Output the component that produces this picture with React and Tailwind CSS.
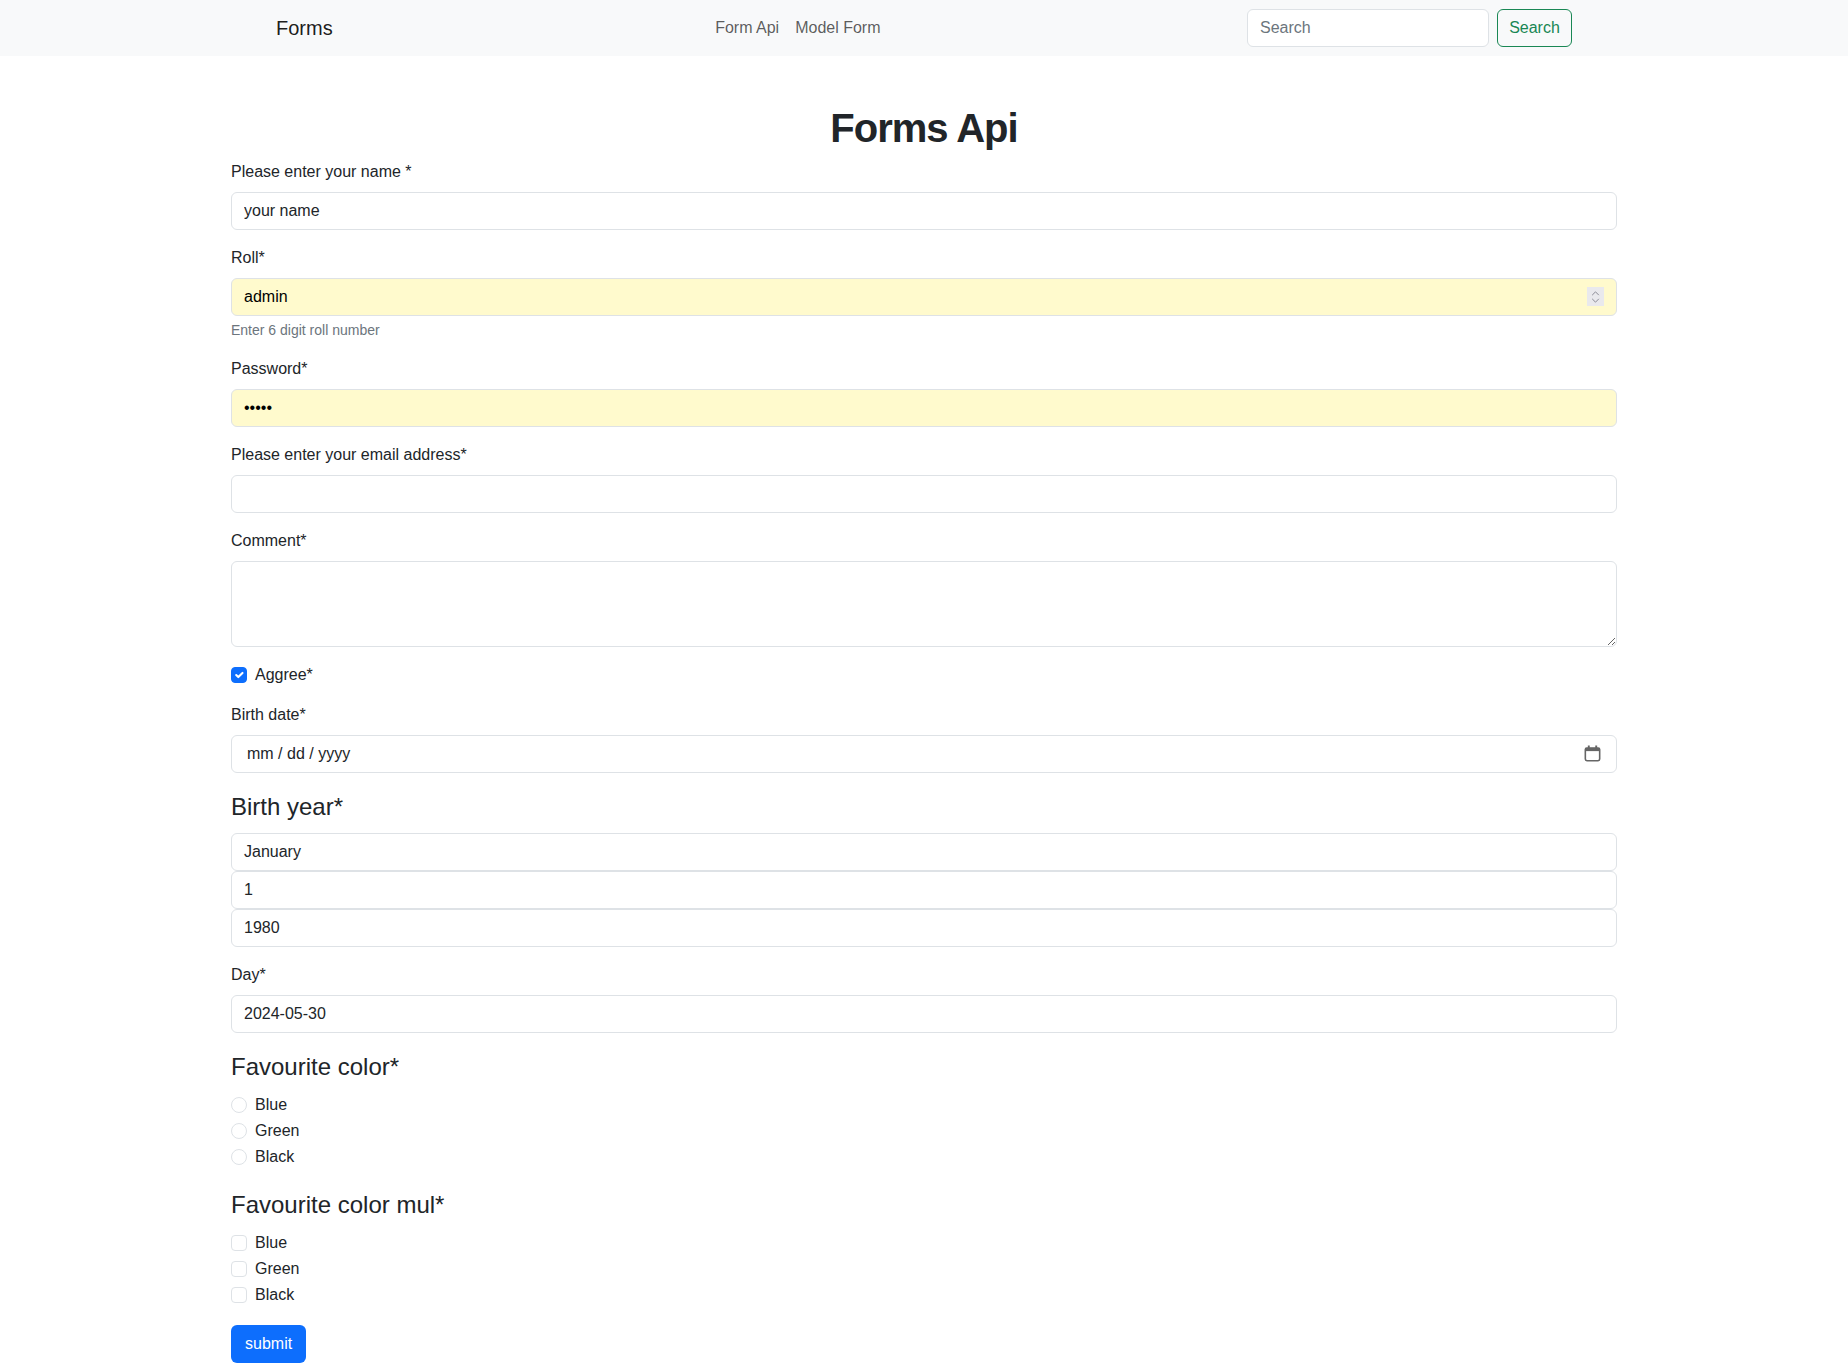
import React from 'react';

const baseCls = 'block w-full h-[38px] px-3 py-1.5 border border-[#dee2e6] rounded-md text-base leading-6 outline-none';
const inputCls = `${baseCls} text-[#212529] bg-white`;
const autoCls = `${baseCls} text-black bg-[#fffacd]`;

function Field({ label, children, help }) {
    return (
        <div className="mb-4">
            <label className="block mb-2 text-base leading-6">{label}</label>
            {children}
            {help && <div className="mt-1 text-sm leading-[21px] text-[#6c757d]">{help}</div>}
        </div>
    );
}

function Check({ type = 'checkbox', label, checked = false }) {
    const round = type === 'radio' ? 'rounded-full' : 'rounded-[4px]';
    return (
        <div className="flex min-h-6 mb-0.5">
            <span className={`mt-1 w-4 h-4 shrink-0 border flex items-center justify-center ${round} ${checked ? 'bg-[#0d6efd] border-[#0d6efd]' : 'bg-white border-[#dee2e6]'}`}>
                {checked && (
                    <svg viewBox="0 0 20 20" className="w-4 h-4" fill="none" stroke="#fff" strokeWidth="3" strokeLinecap="round" strokeLinejoin="round">
                        <path d="M6 10l3 3l6-6" />
                    </svg>
                )}
            </span>
            <span className="ml-2 text-base leading-6">{label}</span>
        </div>
    );
}

export default function App() {
    return (
        <div className="min-h-screen bg-white text-[#212529] font-['Liberation_Sans',Arial,sans-serif]">
            {/* NAVBAR */}
            <nav className="h-14 bg-[#f8f9fa]">
                <div className="w-[1296px] mx-auto h-full flex items-center">
                    <span className="text-xl leading-[30px] text-black/90 mr-4">Forms</span>
                    <ul className="mx-auto flex">
                        <li className="px-2 text-base text-black/65">Form Api</li>
                        <li className="px-2 text-base text-black/65">Model Form</li>
                    </ul>
                    <form className="flex">
                        <input placeholder="Search" className="w-[242px] h-[38px] px-3 border border-[#dee2e6] rounded-md bg-white text-base placeholder:text-[#6c757d] outline-none mr-2" />
                        <button type="button" className="w-[75px] h-[38px] border border-[#198754] text-[#198754] rounded-md text-base">Search</button>
                    </form>
                </div>
            </nav>

            {/* FORM */}
            <div className="w-3/4 mx-auto mt-12">
                <h1 className="text-[40px] leading-[48px] font-semibold tracking-[-1px] text-center mb-2">Forms Api</h1>

                <Field label="Please enter your name *">
                    <input className={inputCls} defaultValue="your name" />
                </Field>

                <Field label="Roll*" help="Enter 6 digit roll number">
                    <div className="relative">
                        <input className={autoCls} defaultValue="admin" />
                        <span className="absolute right-[13px] top-[9px] w-[17px] h-[19px] bg-[#e9e9ed] flex flex-col items-center justify-center gap-[2px]">
                            <svg viewBox="0 0 10 6" className="w-[9px] h-[5px]" fill="none" stroke="#8a8a95" strokeWidth="1.2"><path d="M1 5l4-4l4 4" /></svg>
                            <svg viewBox="0 0 10 6" className="w-[9px] h-[5px]" fill="none" stroke="#8a8a95" strokeWidth="1.2"><path d="M1 1l4 4l4-4" /></svg>
                        </span>
                    </div>
                </Field>

                <Field label="Password*">
                    <input type="password" className={autoCls} defaultValue="admin" />
                </Field>

                <Field label="Please enter your email address*">
                    <input type="email" className={inputCls} />
                </Field>

                <Field label="Comment*">
                    <textarea rows={3} className="block w-full h-[86px] px-3 py-1.5 border border-[#dee2e6] rounded-md text-base leading-6 bg-white outline-none resize-y" />
                </Field>

                <div className="mb-4">
                    <Check label="Aggree*" checked />
                </div>

                <Field label="Birth date*">
                    <div className="relative">
                        <div className={`${inputCls} !pl-[15px]`}>mm / dd / yyyy</div>
                        <svg viewBox="0 0 16 16" className="absolute right-[16px] top-[10px] w-[17px] h-[17px]" fill="none" stroke="#666" strokeWidth="1.5">
                            <rect x="1.25" y="2.75" width="13.5" height="12" rx="1.5" />
                            <rect x="1.25" y="2.75" width="13.5" height="3" fill="#666" stroke="none" />
                            <path d="M4.5 0.5v3M11.5 0.5v3" strokeWidth="1.8" />
                        </svg>
                    </div>
                </Field>

                <fieldset className="mb-4">
                    <legend className="text-2xl leading-9 mb-2">Birth year*</legend>
                    <div className={inputCls}>January</div>
                    <div className={inputCls}>1</div>
                    <div className={inputCls}>1980</div>
                </fieldset>

                <Field label="Day*">
                    <input className={inputCls} defaultValue="2024-05-30" />
                </Field>

                <fieldset className="mb-4">
                    <legend className="text-2xl leading-9 mb-2">Favourite color*</legend>
                    {['Blue', 'Green', 'Black'].map(c => <Check key={c} type="radio" label={c} />)}
                </fieldset>

                <fieldset className="mb-4">
                    <legend className="text-2xl leading-9 mb-2">Favourite color mul*</legend>
                    {['Blue', 'Green', 'Black'].map(c => <Check key={c} label={c} />)}
                </fieldset>

                <button type="button" className="h-[38px] px-[14px] bg-[#0d6efd] text-white rounded-md text-base">submit</button>
            </div>
        </div>
    );
}
